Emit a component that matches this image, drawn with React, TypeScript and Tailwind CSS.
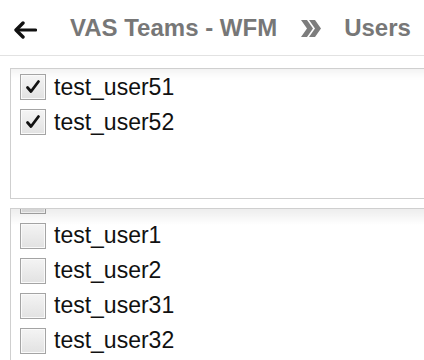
import React from 'react';

const selected = ['test_user51', 'test_user52'];
const available = ['test_user1', 'test_user2', 'test_user31', 'test_user32'];

function Box({ checked }: { checked?: boolean }) {
  return (
    <span className="flex h-[26px] w-[26px] shrink-0 items-center justify-center border border-[#a4a4a4] bg-gradient-to-b from-[#f4f4f4] to-[#e2e2e2] shadow-[inset_0_0_0_1px_#fafafa]">
      {checked && (
        <svg width="16" height="16" viewBox="0 0 16 16">
          <path d="M2.5 8.5 L6 12.5 L13.5 2.5" fill="none" stroke="#111" strokeWidth="2.8" strokeLinecap="round" strokeLinejoin="round" />
        </svg>
      )}
    </span>
  );
}

function Row({ name, checked }: { name: string; checked?: boolean }) {
  return (
    <div className="flex h-[35px] items-center gap-[8px] pl-[9px]">
      <Box checked={checked} />
      <span className="text-[23px] leading-none text-[#111]">{name}</span>
    </div>
  );
}

export default function App() {
  return (
    <div className="h-[360px] w-[424px] overflow-hidden bg-white font-['Liberation_Sans',Arial,sans-serif]">
      {/* Header */}
      <div className="flex h-[56px] items-center border-b border-[#e2e2e2]">
        <svg className="ml-[13px] mt-[4px]" width="24" height="18" viewBox="0 0 24 18">
          <path d="M22.5 9 H4" stroke="#111" strokeWidth="3.2" strokeLinecap="round" />
          <path d="M10 2 L3 9 L10 16" fill="none" stroke="#111" strokeWidth="3.4" strokeLinecap="round" strokeLinejoin="round" />
        </svg>
        <span className="ml-[33px] text-[24px] font-bold text-[#777]">VAS Teams - WFM</span>
        <svg className="ml-[24px] mt-[2px] blur-[0.5px]" width="20" height="17" viewBox="0 0 20 17">
          <path d="M0 0 H6 L12 8.5 L6 17 H0 L6 8.5 Z" fill="#7d7d7d" />
          <path d="M8 0 H14 L20 8.5 L14 17 H8 L14 8.5 Z" fill="#7d7d7d" />
        </svg>
        <span className="ml-[23px] text-[24px] font-bold text-[#777]">Users</span>
      </div>

      {/* Selected */}
      <div className="ml-[10px] mt-[12px] h-[131px] w-[440px] border border-[#cfcfcf] shadow-[inset_0_14px_12px_-12px_rgba(0,0,0,0.08)]">
        <div className="pt-[0.5px]">
          {selected.map((n) => (
            <Row key={n} name={n} checked />
          ))}
        </div>
      </div>

      {/* Available, scrolled down a little */}
      <div className="relative ml-[10px] mt-[9px] h-[200px] w-[440px] overflow-hidden border border-[#cfcfcf]">
        <div className="-mt-[26px]">
          <div className="flex h-[35px] items-center pl-[9px]">
            <Box />
          </div>
          {available.map((n) => (
            <Row key={n} name={n} />
          ))}
        </div>
        <div className="pointer-events-none absolute inset-x-0 top-0 h-[16px] bg-gradient-to-b from-[rgba(0,0,0,0.07)] to-transparent" />
      </div>
    </div>
  );
}
